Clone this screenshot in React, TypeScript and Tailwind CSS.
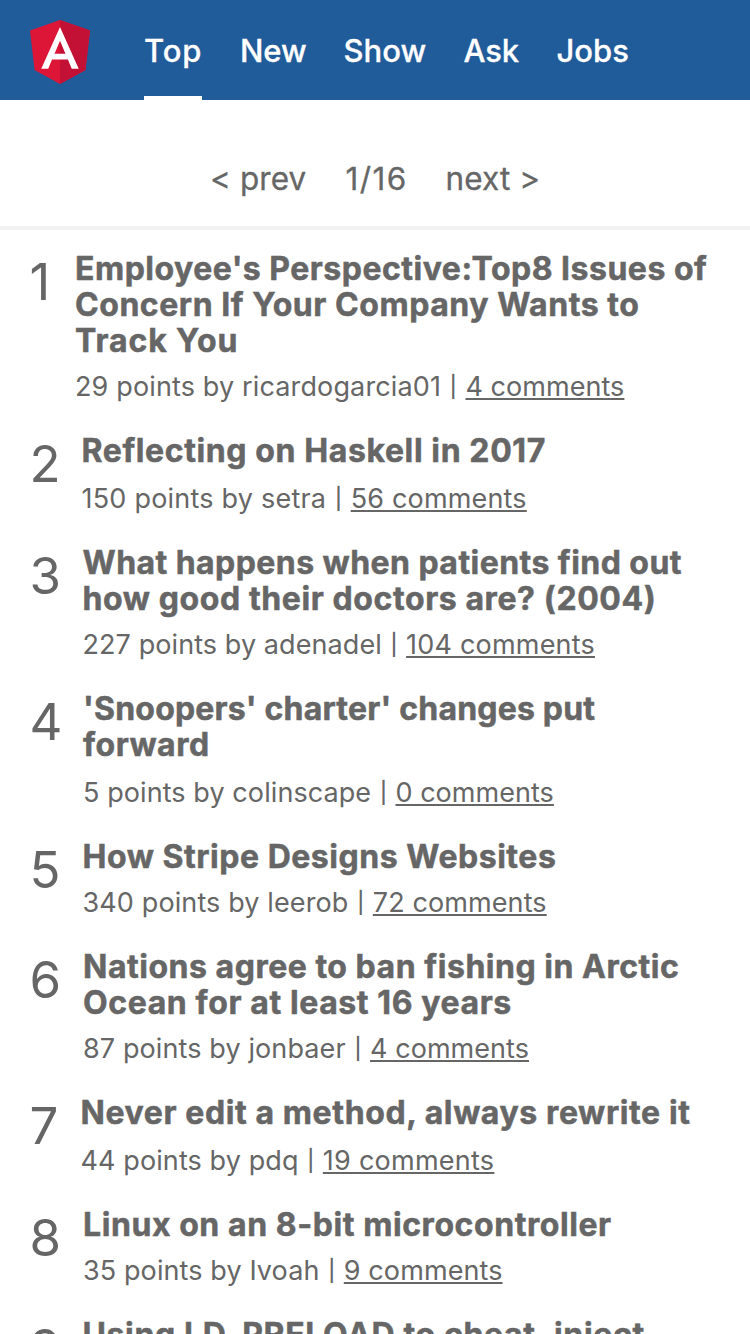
import React from "react";

type Line = { text: string; tracking: string };

type Story = {
  rank: number;
  rankWidth: string;
  title: Line[];
  meta: Line;
  comments: Line;
  metaGap: string;
};

const tabs = [
  { label: "Top", box: "w-[58px] tracking-[0.9px]", active: true },
  { label: "New", box: "w-[65.5px] tracking-[-0.1px]", active: false },
  { label: "Show", box: "w-[82px]", active: false },
  { label: "Ask", box: "w-[55px] tracking-[-0.1px]", active: false },
  { label: "Jobs", box: "w-[73px]", active: false },
];

const stories: Story[] = [
  {
    rank: 1,
    rankWidth: "w-[45px]",
    title: [
      { text: "Employee's Perspective:Top8 Issues of", tracking: "tracking-[0.5px]" },
      { text: "Concern If Your Company Wants to", tracking: "tracking-[0.55px]" },
      { text: "Track You", tracking: "tracking-[0.9px]" },
    ],
    meta: { text: "29 points by ricardogarcia01", tracking: "tracking-[0.14px]" },
    comments: { text: "4 comments", tracking: "tracking-[0.05px]" },
    metaGap: "mt-[10px]",
  },
  {
    rank: 2,
    rankWidth: "w-[51.5px]",
    title: [{ text: "Reflecting on Haskell in 2017", tracking: "tracking-[0.61px]" }],
    meta: { text: "150 points by setra", tracking: "tracking-[0.22px]" },
    comments: { text: "56 comments", tracking: "tracking-[0.17px]" },
    metaGap: "mt-[12px]",
  },
  {
    rank: 3,
    rankWidth: "w-[52.5px]",
    title: [
      { text: "What happens when patients find out", tracking: "tracking-[0.44px]" },
      { text: "how good their doctors are? (2004)", tracking: "tracking-[0.59px]" },
    ],
    meta: { text: "227 points by adenadel", tracking: "tracking-[0.08px]" },
    comments: { text: "104 comments", tracking: "tracking-[0.2px]" },
    metaGap: "mt-[10px]",
  },
  {
    rank: 4,
    rankWidth: "w-[53px]",
    title: [
      { text: "'Snoopers' charter' changes put", tracking: "tracking-[0.2px]" },
      { text: "forward", tracking: "tracking-[0.5px]" },
    ],
    meta: { text: "5 points by colinscape", tracking: "tracking-[0.08px]" },
    comments: { text: "0 comments", tracking: "tracking-[0.04px]" },
    metaGap: "mt-[12px]",
  },
  {
    rank: 5,
    rankWidth: "w-[52.5px]",
    title: [{ text: "How Stripe Designs Websites", tracking: "tracking-[0.53px]" }],
    meta: { text: "340 points by leerob", tracking: "tracking-[0.12px]" },
    comments: { text: "72 comments", tracking: "tracking-[0.1px]" },
    metaGap: "mt-[10px]",
  },
  {
    rank: 6,
    rankWidth: "w-[53px]",
    title: [
      { text: "Nations agree to ban fishing in Arctic", tracking: "tracking-[0.52px]" },
      { text: "Ocean for at least 16 years", tracking: "tracking-[0.6px]" },
    ],
    meta: { text: "87 points by jonbaer", tracking: "tracking-[0.11px]" },
    comments: { text: "4 comments", tracking: "tracking-[0.05px]" },
    metaGap: "mt-[10px]",
  },
  {
    rank: 7,
    rankWidth: "w-[50.5px]",
    title: [{ text: "Never edit a method, always rewrite it", tracking: "tracking-[0.6px]" }],
    meta: { text: "44 points by pdq", tracking: "tracking-[0.1px]" },
    comments: { text: "19 comments", tracking: "tracking-[0.25px]" },
    metaGap: "mt-[12px]",
  },
  {
    rank: 8,
    rankWidth: "w-[53px]",
    title: [{ text: "Linux on an 8-bit microcontroller", tracking: "tracking-[0.57px]" }],
    meta: { text: "35 points by Ivoah", tracking: "tracking-[0.1px]" },
    comments: { text: "9 comments", tracking: "tracking-[0.1px]" },
    metaGap: "mt-[10px]",
  },
  {
    rank: 9,
    rankWidth: "w-[52.5px]",
    title: [{ text: "Using LD_PRELOAD to cheat, inject", tracking: "tracking-[0.63px]" }],
    meta: { text: "", tracking: "" },
    comments: { text: "", tracking: "" },
    metaGap: "mt-[10px]",
  },
];

function Logo() {
  return (
    <svg className="h-16 w-[60px]" viewBox="31.9 30 186.2 200" preserveAspectRatio="none" aria-hidden="true">
      <path fill="#dd1638" d="M125 30 31.9 63.2l14.2 123.1L125 230l78.9-43.7 14.2-123.1z" />
      <path fill="#c31035" d="M125 30v200l78.9-43.7 14.2-123.1z" />
      <path
        fill="#fff"
        d="M125 52.1 66.8 182.6h21.7l11.7-29.2h49.4l11.7 29.2H183zm17 83.3h-34l17-40.9z"
      />
    </svg>
  );
}

function StoryRow({ story }: { story: Story }) {
  return (
    <li className="flex pb-7 pl-[29.5px]">
      <span className={`${story.rankWidth} mt-px ml-0 mr-[0.5px] h-[60px] shrink-0 text-[51px] leading-[60px]`}>
        {story.rank}
      </span>
      <div className="min-w-0">
        <h2 className="text-[32px] leading-[36px] font-bold [-webkit-text-stroke:0.5px_#666666]">
          {story.title.map((line) => (
            <span key={line.text} className={`block whitespace-nowrap ${line.tracking}`}>
              {line.text}
            </span>
          ))}
        </h2>
        {story.meta.text && (
          <p className={`${story.metaGap} h-9 text-[27px] leading-[36px] whitespace-pre`}>
            <span className={story.meta.tracking}>{story.meta.text} </span>
            <span className="inline-block scale-y-[0.78]">|</span>{" "}
            <a
              className={`underline decoration-2 underline-offset-[2px] [text-decoration-skip-ink:none] ${story.comments.tracking}`}
            >
              {story.comments.text}
            </a>
          </p>
        )}
      </div>
    </li>
  );
}

export default function App() {
  return (
    <div className="h-[1334px] w-[750px] overflow-hidden bg-white font-[Inter,sans-serif] text-[#666666]">
      <header className="flex h-[100px] bg-[#205b9a] pl-[30px] text-white">
        <div className="mr-[54px] flex w-[60px] items-start pt-[19.5px]">
          <Logo />
        </div>
        <nav className="flex gap-[38px] text-[31px] leading-[102px] font-medium [-webkit-text-stroke:0.3px_white]">
          {tabs.map((tab) => (
            <a
              key={tab.label}
              className={`${tab.box} h-[100px] whitespace-nowrap ${tab.active ? "border-b-4 border-white" : ""}`}
            >
              {tab.label}
            </a>
          ))}
        </nav>
      </header>
      <div className="flex h-[130px] border-b-4 border-[#f2f2f2] pt-[59px] pl-[210px] text-[31.5px] leading-[40px] whitespace-nowrap [-webkit-text-stroke:0.3px_#666666]">
        <span className="w-[135.5px] tracking-[0.1px]">&lt; prev</span>
        <span className="w-[100px] tracking-[1.4px]">1/16</span>
        <span className="tracking-[0.1px]">next &gt;</span>
      </div>
      <ol className="pt-[21px]">
        {stories.map((story) => (
          <StoryRow key={story.rank} story={story} />
        ))}
      </ol>
    </div>
  );
}
